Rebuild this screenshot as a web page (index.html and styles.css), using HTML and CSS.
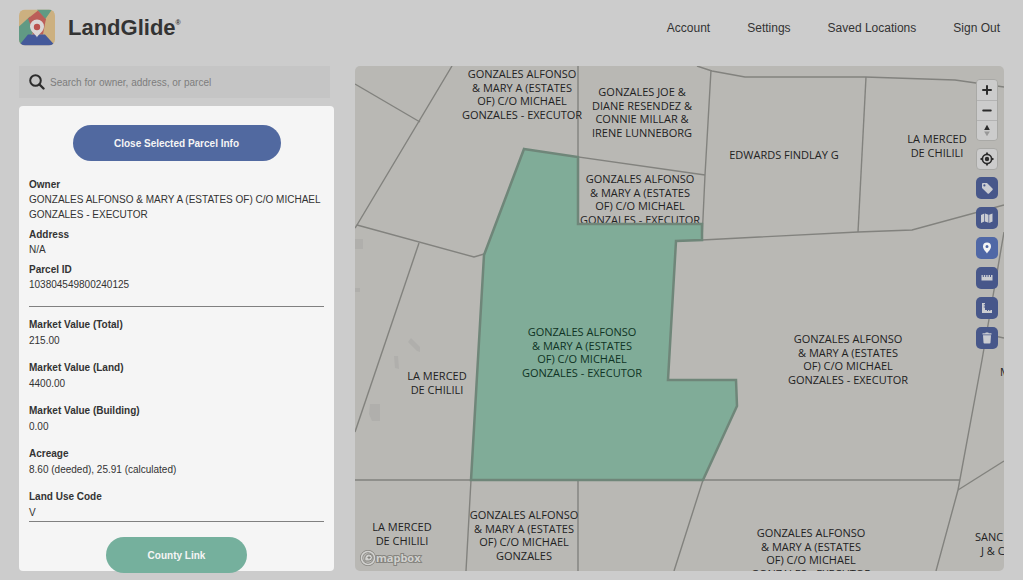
FILE: index.html
```html
<!DOCTYPE html>
<html lang="en">
<head>
<meta charset="utf-8">
<meta name="viewport" content="width=device-width, initial-scale=1">
<title>LandGlide</title>
<link rel="stylesheet" href="styles.css">
</head>
<body>
<header class="header">
  <a class="brand" href="#">
    <svg class="brand-mark" viewBox="0 0 36 36" aria-hidden="true">
      <defs><clipPath id="mark"><rect width="36" height="36" rx="6"/></clipPath></defs>
      <g clip-path="url(#mark)">
        <rect width="36" height="36" fill="#ccb080"/>
        <path d="M0 17 11 7l8 12L0 36z" fill="#619a84"/>
        <path d="M18 0h15l-7 10z" fill="#619a84"/>
        <path d="M19 1 27 10 18 20 12 17 9 9z" fill="#bb5e59"/>
        <path d="M27 9 18 20l-6-3 2 8h10z" fill="#bb5e59"/>
        <path d="M0 36 9 25h17l10 11z" fill="#44599a"/>
        <path d="M18 28c-1-3-7-6-7-11a7 7 0 0 1 14 0c0 5-6 8-7 11z" fill="#dad7d7"/>
        <circle cx="18" cy="17.500" r="3.200" fill="#bb5350"/>
      </g>
    </svg>
    <span class="brand-name">LandGlide<sup class="brand-reg">®</sup></span>
  </a>
  <nav class="nav">
    <a href="#">Account</a>
    <a href="#">Settings</a>
    <a href="#">Saved Locations</a>
    <a href="#">Sign Out</a>
  </nav>
</header>

<main class="main">
  <aside class="sidebar">
    <label class="search">
      <svg class="search-icon" viewBox="0 0 16 16" aria-hidden="true"><circle cx="6.5" cy="6.5" r="5.3" fill="none" stroke="#2d2d2d" stroke-width="2"/><path d="m10.5 10.5 4 4" stroke="#2d2d2d" stroke-width="2.4" stroke-linecap="round"/></svg>
      <input class="search-input" type="search" placeholder="Search for owner, address, or parcel" aria-label="Search for owner, address, or parcel">
    </label>
    <section class="panel">
      <button class="button button-close" type="button">Close Selected Parcel Info</button>
      <dl class="facts">
        <div><dt>Owner</dt><dd>GONZALES ALFONSO &amp; MARY A (ESTATES OF) C/O MICHAEL GONZALES - EXECUTOR</dd></div>
        <div><dt>Address</dt><dd>N/A</dd></div>
        <div><dt>Parcel ID</dt><dd>103804549800240125</dd></div>
      </dl>
      <dl class="facts facts-values">
        <div><dt>Market Value (Total)</dt><dd>215.00</dd></div>
        <div><dt>Market Value (Land)</dt><dd>4400.00</dd></div>
        <div><dt>Market Value (Building)</dt><dd>0.00</dd></div>
        <div><dt>Acreage</dt><dd>8.60 (deeded), 25.91 (calculated)</dd></div>
        <div><dt>Land Use Code</dt><dd>V</dd></div>
      </dl>
      <a class="button button-county" href="#">County Link</a>
    </section>
  </aside>

  <section class="map" aria-label="Parcel map">
    <svg class="map-canvas" viewBox="355 66 649 505" preserveAspectRatio="xMidYMid slice">
      <g class="buildings">
        <path d="M355 239h8v10h-8zM355 288h5v4h-5zM411 338l9 9v5l-3-1-9-9zM394 356h4l1 13-4-1zM370 404h10v17h-8l-3-7z"/>
      </g>
      <g class="lines">
        <path d="M355 84 420 122"/>
        <path d="M452 66 357 225l117 32 10-3"/>
        <path d="M357 225l-2 3"/>
        <path d="M419 243 355 432"/>
        <path d="M578 66v91l127 18"/>
        <path d="M697 66l15 5 33 6h120l90 3 21 3 28 4"/>
        <path d="M711 70 705 175 702 240"/>
        <path d="M702 240 858 232 912 230 1004 205"/>
        <path d="M866 77 858 232"/>
        <path d="M355 480H960"/>
        <path d="M1004 232 982 360 958 490 936 571"/>
        <path d="M958 490 1004 461"/>
        <path d="M985 334 1004 338"/>
        <path d="M471 480 466 571M578 480v91M703 480 674 571"/>
      </g>
      <g class="labels">
        <text y="78"><tspan x="522">GONZALES ALFONSO</tspan><tspan x="522" dy="14">&amp; MARY A (ESTATES</tspan><tspan x="522" dy="13">OF) C/O MICHAEL</tspan><tspan x="522" dy="14">GONZALES - EXECUTOR</tspan></text>
        <text y="96"><tspan x="642">GONZALES JOE &amp;</tspan><tspan x="642" dy="14">DIANE RESENDEZ &amp;</tspan><tspan x="642" dy="13">CONNIE MILLAR &amp;</tspan><tspan x="642" dy="14">IRENE LUNNEBORG</tspan></text>
        <text y="183"><tspan x="640">GONZALES ALFONSO</tspan><tspan x="640" dy="14">&amp; MARY A (ESTATES</tspan><tspan x="640" dy="13">OF) C/O MICHAEL</tspan><tspan x="640" dy="14">GONZALES - EXECUTOR</tspan></text>
        <text x="784" y="159">EDWARDS FINDLAY G</text>
        <text y="143"><tspan x="937">LA MERCED</tspan><tspan x="937" dy="14">DE CHILILI</tspan></text>
        <text y="380"><tspan x="437">LA MERCED</tspan><tspan x="437" dy="14">DE CHILILI</tspan></text>
        <text y="343"><tspan x="848">GONZALES ALFONSO</tspan><tspan x="848" dy="14">&amp; MARY A (ESTATES</tspan><tspan x="848" dy="13">OF) C/O MICHAEL</tspan><tspan x="848" dy="14">GONZALES - EXECUTOR</tspan></text>
        <text y="531"><tspan x="402">LA MERCED</tspan><tspan x="402" dy="14">DE CHILILI</tspan></text>
        <text y="519"><tspan x="524">GONZALES ALFONSO</tspan><tspan x="524" dy="14">&amp; MARY A (ESTATES</tspan><tspan x="524" dy="13">OF) C/O MICHAEL</tspan><tspan x="524" dy="14">GONZALES</tspan></text>
        <text y="537"><tspan x="811">GONZALES ALFONSO</tspan><tspan x="811" dy="14">&amp; MARY A (ESTATES</tspan><tspan x="811" dy="13">OF) C/O MICHAEL</tspan><tspan x="811" dy="14">GONZALES - EXECUTOR</tspan></text>
        <text class="label-cut" x="1000" y="376">M</text>
        <text class="label-cut" y="541"><tspan x="975">SANC</tspan><tspan x="981" dy="14">J &amp; C</tspan></text>
      </g>
      <path class="selected" d="M524 149 578 157V224H702V240L676 241 668 380H736L737 406 703 480H471L484 255Z"/>
      <g class="labels labels-selected">
        <text y="336"><tspan x="582">GONZALES ALFONSO</tspan><tspan x="582" dy="14">&amp; MARY A (ESTATES</tspan><tspan x="582" dy="13">OF) C/O MICHAEL</tspan><tspan x="582" dy="14">GONZALES - EXECUTOR</tspan></text>
      </g>
    </svg>

    <a class="mapbox" href="#" aria-label="mapbox">
      <svg viewBox="0 0 64 18" width="64" height="18">
        <circle cx="8" cy="9" r="6.5" fill="#b9b8b4" stroke="#85847f" stroke-width="3"/>
        <circle cx="8" cy="9" r="6.5" fill="none" stroke="#d2d2d0" stroke-width="1.6"/>
        <path d="M5 12c-1-4 1-7 4-7a3.500 3.500 0 0 1 0 7z" fill="#d2d2d0" stroke="#85847f"/>
        <path d="m9 6.500.7 1.400 1.500.6-1.500.7L9 10.600l-.7-1.400-1.400-.7 1.400-.6z" fill="#85847f"/>
        <text class="mapbox-text" x="16" y="13">mapbox</text>
      </svg>
    </a>

    <div class="controls">
      <div class="zoom">
        <button type="button" aria-label="Zoom in"><svg viewBox="0 0 20 20"><path d="M10 6v8M6 10h8" stroke="#2b2b2b" stroke-width="2" stroke-linecap="round"/></svg></button>
        <button type="button" aria-label="Zoom out"><svg viewBox="0 0 20 20"><path d="M6 10h8" stroke="#2b2b2b" stroke-width="2" stroke-linecap="round"/></svg></button>
        <button type="button" aria-label="Reset north"><svg viewBox="0 0 20 20"><path d="m10 4 3 5.500H7z" fill="#2b2b2b"/><path d="m10 16-3-5h6z" fill="#989898"/></svg></button>
      </div>
      <button class="locate" type="button" aria-label="Find my location"><svg viewBox="1 1 20 20"><circle cx="11" cy="11" r="4.600" fill="none" stroke="#2b2b2b" stroke-width="1.700"/><circle cx="11" cy="11" r="2.200" fill="#2b2b2b"/><path d="M11 4.500V7M11 15v2.500M4.500 11H7M15 11h2.500" stroke="#2b2b2b" stroke-width="1.800"/></svg></button>
      <div class="tools">
        <button type="button" aria-label="Labels"><svg viewBox="0 0 22 22"><path fill-rule="evenodd" d="M6 7a1 1 0 0 1 1-1h4l5.500 5.500a1 1 0 0 1 0 1.400L13 16.400a1 1 0 0 1-1.400 0L6 11zM8.400 7.300a1.100 1.100 0 1 0 0 2.200 1.100 1.100 0 0 0 0-2.200z"/></svg></button>
        <button type="button" aria-label="Map layers"><svg viewBox="0 0 22 22"><path d="M5 8l3.300-1.500v8L5 16zM9 6.500l3.500 1.300v8L9 14.500zM13.200 7.800 16.500 6.400v8l-3.300 1.500z"/></svg></button>
        <button class="is-active" type="button" aria-label="Parcel pin"><svg viewBox="0 0 22 22"><path fill-rule="evenodd" d="M11 16.500c-1-2-4-4-4-7a4 4 0 0 1 8 0c0 3-3 5-4 7zM11 8a1.500 1.500 0 1 0 0 3 1.500 1.500 0 0 0 0-3z"/></svg></button>
        <button type="button" aria-label="Measure distance"><svg viewBox="0 0 22 22"><path d="M5.500 8h1.300v2h1V8h1.400v2h1V8h1.400v2h1V8H14v2h1V8h1.500v5.500h-11z"/></svg></button>
        <button type="button" aria-label="Measure area"><svg viewBox="0 0 22 22"><path d="M6 6h3v1.300H7.800v1H9v1.300H7.800v1H9V13h2v1h1v-1h1.300v1h1v-1H16v3H6z"/></svg></button>
        <button type="button" aria-label="Delete"><svg viewBox="0 0 22 22"><path d="M6.500 6.300h2.700l.6-.8h2.400l.6.8h2.700v1.300h-9zM7 8.300h8l-.5 7.200a1 1 0 0 1-1 1h-5a1 1 0 0 1-1-1z"/></svg></button>
      </div>
    </div>
  </section>
</main>
</body>
</html>
```
FILE: styles.css
```css
* {
  box-sizing: border-box;
}

body {
  display: flex;
  flex-direction: column;
  height: 100vh;
  margin: 0;
  background: #cccccc;
  color: #333333;
  font-family: "Liberation Sans", Arial, sans-serif;
  font-size: 10px;
}

a {
  color: inherit;
  text-decoration: none;
}

button {
  padding: 0;
  border: 0;
  font: inherit;
  cursor: pointer;
}

.header {
  display: flex;
  flex: none;
  align-items: center;
  justify-content: space-between;
  padding: 9px 23px 20px 19px;
}

.brand {
  display: flex;
  align-items: center;
  gap: 13px;
}

.brand-mark {
  width: 36px;
  height: 37px;
}

.brand-name {
  font-size: 22px;
  font-weight: bold;
  line-height: 24px;
}

.brand-reg {
  font-size: 7px;
  line-height: 0;
  vertical-align: 10px;
}

.nav {
  display: flex;
  gap: 37px;
  font-size: 12px;
  line-height: 16px;
}

.main {
  display: flex;
  flex: 1;
  gap: 21px;
  min-height: 0;
  padding: 0 19px 9px;
}

.sidebar {
  display: flex;
  flex: none;
  flex-direction: column;
  gap: 8px;
  width: 315px;
}

.search {
  display: flex;
  align-items: center;
  gap: 5px;
  margin-right: 4px;
  padding: 8px 10px;
  background: #c5c5c5;
}

.search-icon {
  flex: none;
  width: 16px;
  height: 16px;
}

.search-input {
  flex: 1;
  min-width: 0;
  height: 16px;
  padding: 0;
  border: 0;
  outline: 0;
  background: none;
  color: #333333;
  font: inherit;
}

.search-input::placeholder {
  color: #7d7d7d;
}

.panel {
  display: flex;
  flex: 1;
  flex-direction: column;
  align-items: center;
  min-height: 0;
  padding: 19px 10px 0;
  border-radius: 4px;
  background: #f5f5f5;
}

.button {
  display: flex;
  flex: none;
  align-items: center;
  justify-content: center;
  height: 36px;
  border-radius: 18px;
  color: #f5f5f5;
  font-weight: bold;
}

.button-close {
  width: 208px;
  margin-bottom: 16px;
  background: #5169a0;
}

.button-county {
  width: 141px;
  margin-top: 15px;
  background: #75b09d;
}

.facts {
  display: flex;
  flex: none;
  flex-direction: column;
  gap: 5px;
  align-self: stretch;
  margin: 0;
  padding-bottom: 14px;
  border-bottom: 1px solid #808080;
  line-height: 15px;
}

.facts dt {
  font-weight: bold;
}

.facts dd {
  margin: 0;
}

.facts-values {
  gap: 11px;
  padding: 10px 0 0;
  line-height: 16px;
}

.map {
  position: relative;
  flex: 1;
  min-width: 0;
  overflow: hidden;
  border-radius: 5px;
  background: #b9b8b4;
}

.map-canvas {
  display: block;
  width: 100%;
  height: 100%;
}

.buildings {
  fill: #b0afac;
}

.lines {
  fill: none;
  stroke: #82827e;
  stroke-width: 1.4;
}

.labels {
  fill: #22221f;
  font-family: "Open Sans", "Noto Sans", sans-serif;
  font-size: 11px;
  text-anchor: middle;
}

.labels-selected {
  fill: #0f3324;
}

.label-cut {
  text-anchor: start;
}

.selected {
  fill: #80ac98;
  stroke: #6f8679;
  stroke-width: 2.5;
}

.mapbox {
  position: absolute;
  bottom: 4px;
  left: 5px;
  line-height: 0;
}

.mapbox-text {
  fill: #d2d2d0;
  stroke: #85847f;
  stroke-width: 2;
  paint-order: stroke;
  font-family: "Open Sans", sans-serif;
  font-size: 11px;
  font-weight: 700;
}

.controls {
  position: absolute;
  top: 13px;
  right: 6px;
  display: flex;
  flex-direction: column;
  gap: 7px;
  width: 22px;
}

.controls svg {
  display: block;
  width: 100%;
  height: 100%;
}

.zoom {
  overflow: hidden;
  border: 1px solid #a9a9a6;
  border-radius: 4px;
}

.zoom button {
  display: block;
  width: 20px;
  height: 20px;
  background: #cccccc;
}

.zoom button + button {
  border-top: 1px solid #b3b3b3;
}

.locate {
  height: 22px;
  border: 1px solid #a9a9a6;
  border-radius: 4px;
  background: #cccccc;
}

.tools {
  display: flex;
  flex-direction: column;
  gap: 8px;
}

.tools button {
  height: 22px;
  border-radius: 5px;
  background: #47578a;
  fill: #cbcdd2;
}

.tools .is-active {
  background: #5068a6;
  fill: #f5f5f5;
}
```
